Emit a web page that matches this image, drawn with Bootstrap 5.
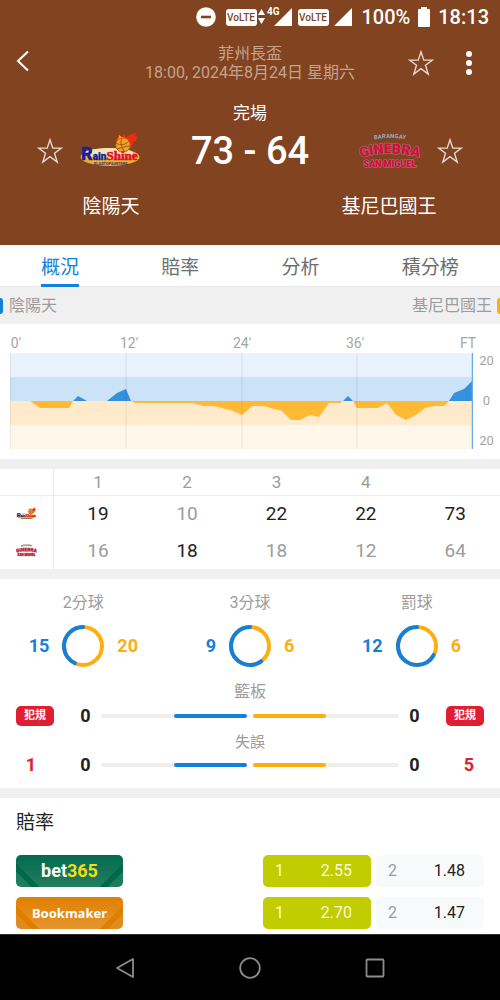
<!DOCTYPE html>
<html lang="zh-Hant">
<head>
<meta charset="utf-8">
<meta name="viewport" content="width=device-width, initial-scale=1">
<title>陰陽天 73 - 64 基尼巴國王</title>
<link href="https://cdn.jsdelivr.net/npm/bootstrap@5.3.0/dist/css/bootstrap.min.css" rel="stylesheet">
<style>
  :root { --brown:#824320; --home:#1280dc; --away:#ffae12; --ink:#222; --mute:#9c9c9c; --line:#f0f0f0; --foul:#e01e32; }
  body { font-family: Roboto, "Noto Sans CJK TC", sans-serif; font-size: 16px; line-height: 20px; color: var(--ink); background: #fff; }
  button { border: 0; background: none; padding: 0; color: inherit; }
  svg { display: block; flex: none; }
  .bg-brown { background: var(--brown); }
  .status-row { height: 34px; font-size: 20px; font-weight: 500; padding-right: 11px; }
  .app-row { height: 58px; padding: 0 16px; }
  .side-l, .side-r { width: 76px; }
  .title-text { color: #c3a48f; line-height: 19px; }
  .fs-state { font-size: 17px; line-height: 20px; margin-top: 11px; }
  .score-text { font-size: 38px; line-height: 44px; font-weight: 500; }
  .score-row { padding: 6px 37px 0; }
  .team-side { gap: 16px; }
  .name-row { padding: 22px 0 26px; font-size: 19px; line-height: 24px; }
  .name-col { width: 222px; }
  .tab-bar { border-bottom: 1px solid #e8e8e8; }
  .tab-item { font-size: 19px; line-height: 32px; padding-top: 7px; color: #6d6d6d; border-bottom: 3px solid transparent; margin-bottom: -1px; }
  .tab-item.active { color: var(--home); border-color: var(--home); }
  .legend-bar { background: var(--line); color: var(--mute); height: 37px; }
  .chip { width: 3px; height: 16px; }
  .chip-home { background: var(--home); border-radius: 0 3px 3px 0; margin-right: 6px; }
  .chip-away { background: var(--away); border-radius: 3px 0 0 3px; margin-left: 5px; }
  .chart-box { padding: 10px 0 10px 10px; font-size: 14px; color: #a6a6a6; }
  .x-axis { line-height: 19px; margin: 0 -5px 0 -4px; }
  .x-axis span { width: 20px; text-align: center; }
  .y-axis { width: 27px; font-size: 13px; line-height: 16px; padding-top: 19px; }
  .plot { width: 100%; height: 96px; }
  .band { height: 10px; background: var(--line); }
  .quarter-table { table-layout: fixed; width: 100%; text-align: center; color: var(--mute); font-size: 19px; }
  .quarter-table th, .quarter-table td { font-weight: 400; padding: 0; height: 37px; }
  .quarter-table thead th { font-size: 17px; height: 26px; border-bottom: 1px solid #ececec; }
  .quarter-table tr > :first-child { width: 53px; border-right: 1px solid #ececec; }
  .quarter-table .win { color: var(--ink); }
  .cap-text { color: var(--mute); text-align: center; }
  .cap-gap { padding-top: 14px; }
  .cap-low { font-size: 15px; line-height: 24px; }
  .shots { padding-top: 14px; }
  .ring-row { gap: 12px; margin-top: 11px; font-size: 18px; font-weight: 700; }
  .ring-row span { width: 40px; }
  .c-home { color: var(--home); } .c-away { color: var(--away); }
  .stats { padding-bottom: 12px; }
  .stat-row { padding: 0 16px; height: 28px; font-size: 18px; font-weight: 700; }
  .stat-low { height: 22px; }
  .foul-col { width: 38px; text-align: center; color: var(--foul); }
  .foul-tag { background: var(--foul); color: #fff; font-size: 11px; line-height: 20px; border-radius: 5px; }
  .num-col { width: 47px; text-align: center; }
  .tracks { gap: 6px; }
  .track { height: 4px; border-radius: 2px; background: #eee; display: flex; }
  .track i { border-radius: 2px; }
  .odds-box { padding: 13px 16px 5px; }
  .odds-title { font-size: 19px; line-height: 24px; font-weight: 400; margin: 0 0 20px; }
  .odds-list { gap: 10px; }
  .odds-row { height: 32px; gap: 5px; }
  .brand { width: 107px; border-radius: 5px; color: #fff; font-weight: 700; }
  .brand-b { background: linear-gradient(45deg, #1e7c5b 11%, #00694a 11% 17%, transparent 17%), linear-gradient(315deg, #1e7c5b 11%, #00694a 11% 17%, transparent 17%), linear-gradient(#016c4c, #267c5f); font-size: 18px; }
  .brand-b span { color: #f5dc12; }
  .brand-m { background: linear-gradient(45deg, #e18b1c 11%, #df7e00 11% 17%, transparent 17%), linear-gradient(315deg, #e18b1c 11%, #df7e00 11% 17%, transparent 17%), linear-gradient(#df8002, #e6962e); font-family: "Noto Sans", sans-serif; font-size: 13px; }
  .odd { width: 108px; border-radius: 5px; padding: 0 19px 0 12px; background: #f8f9fb; color: var(--ink); }
  .odd span { color: var(--mute); }
  .odd.best, .odd.best span { background: #c1cd00; color: #f8f9dc; }
  .sys-nav { background: #000; padding: 22px 114px; border-top: 1px solid #333; }
</style>
</head>
<body>
<div class="d-flex flex-column min-vh-100">
  <header class="bg-brown text-white">
    <div class="status-row d-flex align-items-center justify-content-end">
      <svg width="157" height="34" viewBox="0 0 157 34" class="me-2" role="img" aria-label="狀態">
        <circle cx="10" cy="17" r="9.800" fill="#fff"/><path d="M5 17h10" stroke="#824320" stroke-width="2.600"/>
        <rect x="30" y="9" width="31" height="17" rx="3" fill="#fff"/>
        <rect x="102" y="9" width="31" height="17" rx="3" fill="#fff"/>
        <g font-family="Roboto, sans-serif" font-size="10" font-weight="500" fill="#824320" text-anchor="middle"><text x="45" y="21">VoLTE</text><text x="117" y="21">VoLTE</text></g>
        <path d="M62 15l3.500-6 3.500 6zM62 18l3.500 6 3.500-6z" fill="#fff"/>
        <text x="71" y="15" font-family="Roboto, sans-serif" font-size="10" font-weight="700" fill="#fff">4G</text>
        <path d="M78 26L96 8v18zM138 26L156 8v18z" fill="#fff"/>
      </svg>
      <span>100%</span>
      <svg width="12" height="20" viewBox="0 0 12 20" class="mx-2"><path d="M3 0h6v2h2q1 0 1 1v16q0 1-1 1H1q-1 0-1-1V3q0-1 1-1h2z" fill="#fff"/></svg>
      <span>18:13</span>
    </div>
    <div class="app-row d-flex align-items-center">
      <div class="side-l"><button type="button" aria-label="返回"><svg width="14" height="22" viewBox="0 0 14 22"><path d="M12 1.500L2 11l10 9.500" fill="none" stroke="#fff" stroke-width="2"/></svg></button></div>
      <div class="title-text flex-fill text-center">菲州長盃<br>18:00, 2024年8月24日 星期六</div>
      <div class="side-r d-flex align-items-center justify-content-between">
        <button type="button" aria-label="收藏賽事"><svg width="26" height="26" viewBox="0 0 26 26"><path id="star" d="M13 1.800l2.800 8.300h8.700l-7 5.200 2.700 8.800-7.200-5.400-7.200 5.400 2.700-8.800-7-5.200h8.700z" fill="none" stroke="#e6d9d0" stroke-width="1.400"/></svg></button>
        <button type="button" aria-label="更多" class="me-2"><svg width="14" height="26" viewBox="0 0 14 26"><path d="M7 4v.01M7 13v.01M7 22v.01" stroke="#fff" stroke-width="6" stroke-linecap="round"/></svg></button>
      </div>
    </div>
    <div class="fs-state text-center">完場</div>
    <div class="score-row d-flex align-items-center justify-content-between">
      <div class="team-side d-flex align-items-center">
        <button type="button" aria-label="收藏陰陽天"><svg width="26" height="26"><use href="#star"/></svg></button>
        <svg width="62" height="37" viewBox="0 0 62 37" class="mb-1" role="img" aria-label="RainShine">
          <g id="logo-rain">
            <path d="M37 13c-1-5 3-6 2-10 3 2 3 4 6 0 2 2 0 4 3 3 2-3 6-2 8-5 1 4 0 5 3 5-3 2-1 5-5 5 2 3-2 3-2 6z" fill="#f32a12"/>
            <path d="M38 12c0-4 3-5 2-8 3 2 3 4 5 2 1 3 3 2 4 5l-3 3z" fill="#f9cf16"/>
            <ellipse cx="31" cy="26" rx="29.500" ry="9" fill="#eeb02c"/>
            <ellipse cx="30" cy="22" rx="24" ry="5" fill="#f5e6c2"/>
            <circle cx="44" cy="14" r="7.300" fill="#f2a01e" stroke="#a75a15" stroke-width=".8"/>
            <path d="M37 12c5 3 9 2 13-2M43 7c-2 4-1 9 3 14M38 18c4-1 9-3 13-3" fill="none" stroke="#96521a" stroke-width=".9"/>
            <text x="2" y="29" font-family="Roboto, sans-serif" font-weight="900" font-size="10" fill="#17219b" stroke="#17219b" stroke-width=".3"><tspan font-size="18">R</tspan>ain<tspan font-family="'Liberation Serif', serif" font-weight="700" font-size="13" fill="#e10e2e" stroke="#e10e2e" stroke-width=".6">Shine</tspan></text>
            <text x="15" y="34" font-family="Roboto, sans-serif" font-weight="700" font-size="4" fill="#28306e">ELASTOPAINTERS</text>
          </g>
        </svg>
      </div>
      <div class="score-text">73 - 64</div>
      <div class="team-side d-flex align-items-center">
        <svg width="62" height="37" viewBox="0 0 62 37" role="img" aria-label="Ginebra">
          <g id="logo-gin">
            <path id="arc-top" d="M9 8Q31 2 53 8" fill="none"/>
            <path id="arc-mid" d="M0 25Q31 16 62 25" fill="none"/>
            <g font-family="Roboto, sans-serif" font-weight="900" text-anchor="middle" paint-order="stroke" stroke-linejoin="round">
              <text font-size="6" fill="#aaa09c" stroke="#5c3c2c" stroke-width=".5"><textPath href="#arc-top" startOffset="50%">BARANGAY</textPath></text>
              <text font-size="14" fill="#dc0b35" stroke="#8f7376" stroke-width="1.400"><textPath href="#arc-mid" startOffset="50%">GINEBRA</textPath></text>
              <text x="31" y="34" font-size="9" fill="#dc0b35" stroke="#8f7376" stroke-width="1.400">SAN MIGUEL</text>
            </g>
          </g>
        </svg>
        <button type="button" aria-label="收藏基尼巴國王"><svg width="26" height="26"><use href="#star"/></svg></button>
      </div>
    </div>
    <div class="name-row d-flex justify-content-between text-center">
      <div class="name-col">陰陽天</div>
      <div class="name-col">基尼巴國王</div>
    </div>
  </header>

  <nav class="tab-bar d-flex">
    <div class="flex-fill text-center"><button type="button" class="tab-item active">概況</button></div>
    <div class="flex-fill text-center"><button type="button" class="tab-item">賠率</button></div>
    <div class="flex-fill text-center"><button type="button" class="tab-item">分析</button></div>
    <div class="flex-fill text-center"><button type="button" class="tab-item">積分榜</button></div>
  </nav>

  <main>
    <div class="legend-bar d-flex align-items-center">
      <span class="chip chip-home"></span>陰陽天
      <span class="ms-auto">基尼巴國王</span><span class="chip chip-away"></span>
    </div>

    <section class="chart-box d-flex">
      <div class="flex-fill">
        <div class="x-axis d-flex justify-content-between"><span>0'</span><span>12'</span><span>24'</span><span>36'</span><span>FT</span></div>
        <svg class="plot" viewBox="0 0 463 96" preserveAspectRatio="none" role="img" aria-label="比分走勢">
          <path d="M0 0h463v24H0z" fill="#eaf3fd"/><path d="M0 24h463v24H0z" fill="#cce2f7"/>
          <path d="M0 48h463v24H0z" fill="#ffebcb"/><path d="M0 72h463v24H0z" fill="#fff7ea"/>
          <path d="M20 48L30 55H59L63 48zM121 48L125 50H183L193 53H204L223 58L232 62L240 55L243 53H253L272 58L281 67H290L300 62L309 64L319 50H330L333 48zM343 48L347 55H368L377 50L386 62L396 67L406 62L415 55L424 53H434L439 48z" fill="#ffb935"/>
          <path d="M63 48L68 43L77 48zM97 48L107 40L116 36L121 48zM333 48L338 43L343 48zM439 48L444 40L454 36L463 27V48z" fill="#3491df"/>
          <path d="M.5 0v96M116 0v96M232 0v96M347 0v96" stroke="#000" stroke-opacity=".06" stroke-width="1.500" fill="none"/>
          <path d="M462.500 0v96" stroke="#64aeea" stroke-width="1.500"/>
        </svg>
      </div>
      <div class="y-axis d-flex flex-column justify-content-between text-center"><span>20</span><span>0</span><span>20</span></div>
    </section>

    <div class="band"></div>
    <table class="quarter-table">
      <thead><tr><th></th><th>1</th><th>2</th><th>3</th><th>4</th><th></th></tr></thead>
      <tbody>
        <tr><th><svg width="21" height="13" viewBox="0 0 62 37" class="mx-auto" role="img" aria-label="陰陽天"><use href="#logo-rain"/></svg></th><td class="win">19</td><td>10</td><td class="win">22</td><td class="win">22</td><td class="win">73</td></tr>
        <tr><th><svg width="21" height="13" viewBox="0 0 62 37" class="mx-auto" role="img" aria-label="基尼巴國王"><use href="#logo-gin"/></svg></th><td>16</td><td class="win">18</td><td>18</td><td>12</td><td>64</td></tr>
      </tbody>
    </table>
    <div class="band"></div>

    <section class="stats">
      <div class="shots row g-0">
        <div class="col-4"><div class="cap-text">2分球</div>
          <div class="ring-row d-flex justify-content-center align-items-center"><span class="c-home text-end">15</span>
            <svg width="44" height="44" viewBox="0 0 44 44" fill="none" stroke-width="4"><circle cx="22" cy="22" r="19" stroke="#ffae12"/><circle cx="22" cy="22" r="19" stroke="#1280dc" stroke-linecap="round" pathLength="100" stroke-dasharray="43 57" transform="rotate(-90 22 22) matrix(1 0 0 -1 0 44)"/></svg>
            <span class="c-away">20</span></div></div>
        <div class="col-4"><div class="cap-text">3分球</div>
          <div class="ring-row d-flex justify-content-center align-items-center"><span class="c-home text-end">9</span>
            <svg width="44" height="44" viewBox="0 0 44 44" fill="none" stroke-width="4"><circle cx="22" cy="22" r="19" stroke="#ffae12"/><circle cx="22" cy="22" r="19" stroke="#1280dc" stroke-linecap="round" pathLength="100" stroke-dasharray="60 40" transform="rotate(-90 22 22) matrix(1 0 0 -1 0 44)"/></svg>
            <span class="c-away">6</span></div></div>
        <div class="col-4"><div class="cap-text">罰球</div>
          <div class="ring-row d-flex justify-content-center align-items-center"><span class="c-home text-end">12</span>
            <svg width="44" height="44" viewBox="0 0 44 44" fill="none" stroke-width="4"><circle cx="22" cy="22" r="19" stroke="#ffae12"/><circle cx="22" cy="22" r="19" stroke="#1280dc" stroke-linecap="round" pathLength="100" stroke-dasharray="67 33" transform="rotate(-90 22 22) matrix(1 0 0 -1 0 44)"/></svg>
            <span class="c-away">6</span></div></div>
      </div>
      <div class="cap-text cap-gap">籃板</div>
      <div class="stat-row d-flex align-items-center">
        <div class="foul-col"><div class="foul-tag">犯規</div></div>
        <div class="num-col ps-3">0</div>
        <div class="tracks flex-fill d-flex">
          <div class="track flex-fill justify-content-end"><i class="w-50" style="background:var(--home)"></i></div>
          <div class="track flex-fill"><i class="w-50" style="background:var(--away)"></i></div>
        </div>
        <div class="num-col pe-3">0</div>
        <div class="foul-col"><div class="foul-tag">犯規</div></div>
      </div>
      <div class="cap-text cap-low">失誤</div>
      <div class="stat-row stat-low d-flex align-items-center">
        <div class="foul-col pe-2">1</div>
        <div class="num-col ps-3">0</div>
        <div class="tracks flex-fill d-flex">
          <div class="track flex-fill justify-content-end"><i class="w-50" style="background:var(--home)"></i></div>
          <div class="track flex-fill"><i class="w-50" style="background:var(--away)"></i></div>
        </div>
        <div class="num-col pe-3">0</div>
        <div class="foul-col ps-2">5</div>
      </div>
    </section>
    <div class="band"></div>

    <section class="odds-box">
      <h2 class="odds-title">賠率</h2>
      <div class="odds-list d-flex flex-column">
        <div class="odds-row d-flex">
          <button type="button" class="brand brand-b me-auto">bet<span>365</span></button>
          <button type="button" class="odd best d-flex align-items-center justify-content-between"><span>1</span>2.55</button>
          <button type="button" class="odd d-flex align-items-center justify-content-between"><span>2</span>1.48</button>
        </div>
        <div class="odds-row d-flex">
          <button type="button" class="brand brand-m me-auto">Bookmaker</button>
          <button type="button" class="odd best d-flex align-items-center justify-content-between"><span>1</span>2.70</button>
          <button type="button" class="odd d-flex align-items-center justify-content-between"><span>2</span>1.47</button>
        </div>
      </div>
    </section>
  </main>

  <nav class="sys-nav d-flex justify-content-between mt-auto" aria-label="系統導覽">
    <button type="button" aria-label="返回"><svg width="22" height="22" viewBox="0 0 22 22"><path d="M19 2v18L3 11z" fill="none" stroke="#8c8c8c" stroke-width="1.800" stroke-linejoin="round"/></svg></button>
    <button type="button" aria-label="主頁"><svg width="22" height="22" viewBox="0 0 22 22"><circle cx="11" cy="11" r="9.800" fill="none" stroke="#8c8c8c" stroke-width="1.800"/></svg></button>
    <button type="button" aria-label="最近"><svg width="22" height="22" viewBox="0 0 22 22"><rect x="2.500" y="2.500" width="17" height="17" fill="none" stroke="#8c8c8c" stroke-width="1.800" rx="1"/></svg></button>
  </nav>
</div>
<script src="https://cdn.jsdelivr.net/npm/bootstrap@5.3.0/dist/js/bootstrap.bundle.min.js"></script>
</body>
</html>
